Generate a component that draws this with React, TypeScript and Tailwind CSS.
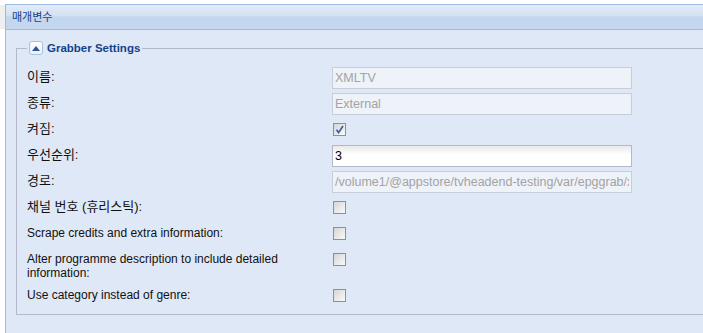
import React from "react";

type Row =
  | { label: string; kind: "text"; value: string; disabled?: boolean }
  | { label: string; kind: "check"; checked?: boolean };

const rows: Row[] = [
  { label: "이름:", kind: "text", value: "XMLTV", disabled: true },
  { label: "종류:", kind: "text", value: "External", disabled: true },
  { label: "켜짐:", kind: "check", checked: true },
  { label: "우선순위:", kind: "text", value: "3" },
  { label: "경로:", kind: "text", value: "/volume1/@appstore/tvheadend-testing/var/epggrab/xmltv.sock", disabled: true },
  { label: "채널 번호 (휴리스틱):", kind: "check" },
  { label: "Scrape credits and extra information:", kind: "check" },
  { label: "Alter programme description to include detailed information:", kind: "check" },
  { label: "Use category instead of genre:", kind: "check" },
];

const isKorean = (s: string) => /[\uac00-\ud7a3]/.test(s);

const Check = ({ checked }: { checked?: boolean }) => (
  <div className="mt-[4px] ml-[1px] w-[13px] h-[13px] border border-[#909090] bg-[linear-gradient(135deg,#d4d4d4,#fbfbfb)] p-[1px]">
    {checked && (
      <svg width="11" height="11" viewBox="0 0 11 11" className="block -mt-[1px] -ml-[1px]">
        <path d="M2.5 5.8 L4.6 8.6 L9 2" fill="none" stroke="#3b5ba5" strokeWidth="1.7" />
      </svg>
    )}
  </div>
);

const Field = (row: Row) => (
  <div className="flex items-start mb-[4px] min-h-[22px]">
    <label
      className={
        isKorean(row.label)
          ? "w-[305px] shrink-0 pr-[5px] pt-[3px] pb-[1px] leading-[14px] text-[13px] text-[#111]"
          : "w-[305px] shrink-0 pr-[5px] pt-[3px] pb-[1px] leading-[14px] text-[#111]"
      }
    >
      {row.label}
    </label>
    {row.kind === "text" ? (
      <input
        readOnly
        defaultValue={row.value}
        className={
          row.disabled
            ? "w-[300px] h-[22px] px-[2px] text-[12.5px] border border-[#c8cdd8] bg-[#eef2f9] text-[#a3a3a3] outline-none"
            : "w-[300px] h-[22px] px-[2px] text-[12.5px] border border-[#b5b8c8] bg-[linear-gradient(to_bottom,#e9e9e9,#ffffff_45%)] text-black outline-none"
        }
      />
    ) : (
      <Check checked={row.checked} />
    )}
  </div>
);

export default function App() {
  return (
    <div className="flex w-[703px] h-[333px] overflow-hidden bg-white pt-[4px] font-['Liberation_Sans','Noto_Sans_CJK_KR',sans-serif] text-[12px]">
      <div className="w-[5px] shrink-0">
        <div className="mt-[1px] h-[24px] bg-[#efefef]" />
      </div>
      <div className="w-[740px] shrink-0 flex flex-col border-l border-t border-[#99bbe8] bg-[#dfe8f6]">
        <div className="h-[25px] flex items-center pl-[6px] border-b border-[#99bbe8] bg-[linear-gradient(to_bottom,#e3ecf8,#d3e1f3_45%,#c3d6ef_50%,#c6d8f0)]">
          <span className="text-[11px] text-[#15428b]">매개변수</span>
        </div>
        <div className="px-[10px] pt-[10px]">
          <fieldset className="border border-[#b5b8c8] pl-[10px] pr-[10px] pt-[11px] pb-[3px]">
            <legend className="px-[2px]">
              <span className="flex items-center h-[16px]">
                <span className="w-[14px] h-[14px] mr-[4px] flex items-center justify-center rounded-[3px] border border-[#a8c0e2] bg-[linear-gradient(to_bottom,#ffffff,#eaf0f9)]">
                  <svg width="8" height="5" viewBox="0 0 8 5" className="block">
                    <path d="M0 5 L4 0 L8 5 Z" fill="#2a56a0" />
                  </svg>
                </span>
                <span className="text-[11.5px] font-bold text-[#15428b] leading-[16px]">Grabber Settings</span>
              </span>
            </legend>
            {rows.map((r) => (
              <Field key={r.label} {...r} />
            ))}
          </fieldset>
        </div>
      </div>
    </div>
  );
}
